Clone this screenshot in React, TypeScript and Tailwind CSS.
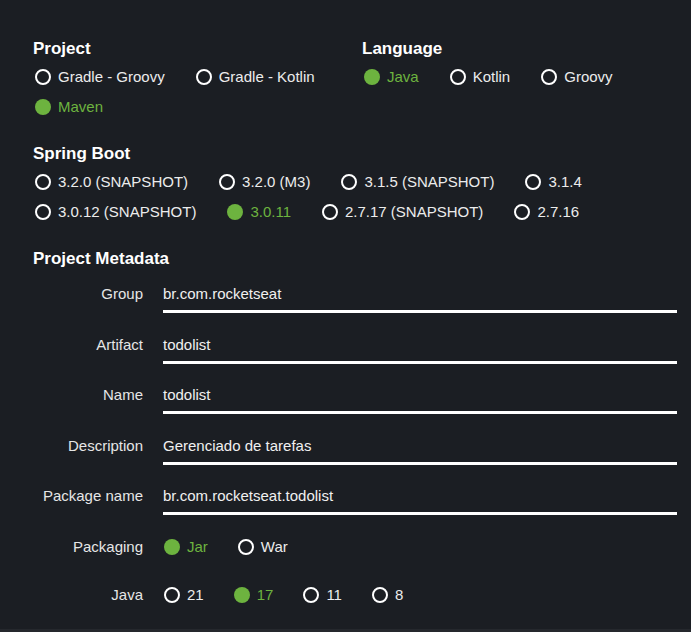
import React from "react";

type Option = { label: string; checked?: boolean };

function Radio({ label, checked, offset = "ml-[2px]" }: Option & { offset?: string }) {
  return (
    <div className="flex h-[30px] items-center">
      {checked ? (
        <span className={`${offset} h-4 w-4 shrink-0 rounded-full bg-[#6db33f]`} />
      ) : (
        <span className={`${offset} h-4 w-4 shrink-0 rounded-full border-2 border-white`} />
      )}
      <span className={`ml-[7px] text-[15px] leading-5 ${checked ? "text-[#6db33f]" : "text-[#ececec]"}`}>
        {label}
      </span>
    </div>
  );
}

function RadioGroup({ options, offset }: { options: Option[]; offset?: string }) {
  return (
    <div className="flex flex-wrap gap-x-[29px]">
      {options.map((o) => (
        <Radio key={o.label} {...o} offset={offset} />
      ))}
    </div>
  );
}

function Heading({ children, className = "" }: { children: React.ReactNode; className?: string }) {
  return <h2 className={`mb-[3px] text-[17px] font-bold leading-5 text-white ${className}`}>{children}</h2>;
}

function TextField({ label, value, className = "" }: { label: string; value: string; className?: string }) {
  return (
    <div className={`flex gap-5 ${className}`}>
      <div className="w-[110px] shrink-0 text-right text-[15px] leading-5 text-[#e6e6e6]">{label}</div>
      <div className="flex-1 border-b-[3px] border-white pb-[6px] text-[15px] leading-5 text-[#f0f0f0]">
        {value}
      </div>
    </div>
  );
}

function RadioField({ label, options, className = "" }: { label: string; options: Option[]; className?: string }) {
  return (
    <div className={`flex items-center gap-5 ${className}`}>
      <div className="w-[110px] shrink-0 text-right text-[15px] leading-5 text-[#e6e6e6]">{label}</div>
      <RadioGroup options={options} offset="ml-[1px]" />
    </div>
  );
}

export default function App() {
  return (
    <div
      className="flex min-h-[632px] flex-col bg-[#1b1e23]"
      style={{ fontFamily: '"Liberation Sans", Arial, sans-serif' }}
    >
      <div className="flex-1 pl-[33px] pr-[14px] pt-[39px]">
        <div className="flex">
          <div className="w-[329px]">
            <Heading>Project</Heading>
            <RadioGroup
              options={[
                { label: "Gradle - Groovy" },
                { label: "Gradle - Kotlin" },
                { label: "Maven", checked: true },
              ]}
            />
          </div>
          <div className="flex-1">
            <Heading>Language</Heading>
            <RadioGroup
              options={[{ label: "Java", checked: true }, { label: "Kotlin" }, { label: "Groovy" }]}
            />
          </div>
        </div>

        <Heading className="mt-[22px]">Spring Boot</Heading>
        <RadioGroup
          options={[
            { label: "3.2.0 (SNAPSHOT)" },
            { label: "3.2.0 (M3)" },
            { label: "3.1.5 (SNAPSHOT)" },
            { label: "3.1.4" },
          ]}
        />
        <RadioGroup
          options={[
            { label: "3.0.12 (SNAPSHOT)" },
            { label: "3.0.11", checked: true },
            { label: "2.7.17 (SNAPSHOT)" },
            { label: "2.7.16" },
          ]}
        />

        <Heading className="mt-[22px]">Project Metadata</Heading>
        <div className="mt-[15px] flex flex-col gap-y-[21.5px]">
          <TextField label="Group" value="br.com.rocketseat" />
          <TextField label="Artifact" value="todolist" />
          <TextField label="Name" value="todolist" />
          <TextField label="Description" value="Gerenciado de tarefas" />
          <TextField label="Package name" value="br.com.rocketseat.todolist" />
        </div>
        <RadioField
          className="mt-[17px]"
          label="Packaging"
          options={[{ label: "Jar", checked: true }, { label: "War" }]}
        />
        <RadioField
          className="mt-[18px]"
          label="Java"
          options={[{ label: "21" }, { label: "17", checked: true }, { label: "11" }, { label: "8" }]}
        />
      </div>
      <div className="h-[3px] bg-[#25282d]" />
    </div>
  );
}
